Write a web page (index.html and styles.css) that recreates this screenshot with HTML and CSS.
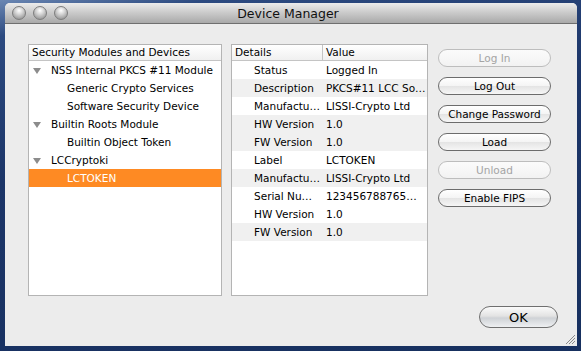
FILE: index.html
```html
<!DOCTYPE html>
<html lang="en">
  <head>
    <meta charset="UTF-8" />
    <title>Device Manager</title>
    <link rel="stylesheet" href="styles.css">
  </head>
  <body>
    <div class="window">
      <!-- title bar with graphite window buttons -->
      <div class="titlebar">
        <div class="lights">
          <span class="light"></span>
          <span class="light"></span>
          <span class="light"></span>
        </div>
        <div class="title">Device Manager</div>
      </div>

      <div class="content">
        <div class="main">
          <div class="panel tree-panel">
            <div class="panel-head">
              <div class="head-cell">Security Modules and Devices</div>
            </div>
            <div class="tree-row"><span class="twisty"></span>NSS Internal PKCS #11 Module</div>
            <div class="tree-row child">Generic Crypto Services</div>
            <div class="tree-row child">Software Security Device</div>
            <div class="tree-row"><span class="twisty"></span>Builtin Roots Module</div>
            <div class="tree-row child">Builtin Object Token</div>
            <div class="tree-row"><span class="twisty"></span>LCCryptoki</div>
            <div class="tree-row child selected">LCTOKEN</div>
          </div>

          <div class="panel details-panel">
            <div class="panel-head">
              <div class="head-cell key">Details</div>
              <div class="head-cell">Value</div>
            </div>
            <div class="detail-row"><span class="key">Status</span><span class="val">Logged In</span></div>
            <div class="detail-row stripe"><span class="key">Description</span><span class="val">PKCS#11 LCC So…</span></div>
            <div class="detail-row"><span class="key">Manufactu…</span><span class="val">LISSI-Crypto Ltd</span></div>
            <div class="detail-row stripe"><span class="key">HW Version</span><span class="val">1.0</span></div>
            <div class="detail-row stripe"><span class="key">FW Version</span><span class="val">1.0</span></div>
            <div class="detail-row"><span class="key">Label</span><span class="val">LCTOKEN</span></div>
            <div class="detail-row stripe"><span class="key">Manufactu…</span><span class="val">LISSI-Crypto Ltd</span></div>
            <div class="detail-row"><span class="key">Serial Nu…</span><span class="val">123456788765…</span></div>
            <div class="detail-row"><span class="key">HW Version</span><span class="val">1.0</span></div>
            <div class="detail-row stripe"><span class="key">FW Version</span><span class="val">1.0</span></div>
          </div>

          <div class="actions">
            <button class="btn" disabled>Log In</button>
            <button class="btn">Log Out</button>
            <button class="btn">Change Password</button>
            <button class="btn">Load</button>
            <button class="btn" disabled>Unload</button>
            <button class="btn">Enable FIPS</button>
          </div>
        </div>

        <div class="footer">
          <button class="ok-button">OK</button>
        </div>
      </div>

      <svg class="grip" width="12" height="12" viewBox="0 0 12 12">
        <path d="M11 2 L2 11 M11 5 L5 11 M11 8 L8 11" stroke="#8a8a8a" stroke-width="1" />
      </svg>
    </div>
  </body>
</html>
```

FILE: styles.css
```css
* {
  box-sizing: border-box;
  margin: 0;
  padding: 0;
}

html,
body {
  height: 100%;
  overflow: hidden;
}

body {
  font-family: "DejaVu Sans", "Lucida Grande", sans-serif;
  font-size: 10.5px;
  color: #000000;
  background: linear-gradient(170deg, #6b87b3 0%, #2c4a80 8%, #1c3568 40%, #17305f 100%);
  padding: 3px 4px 0 5px;
}

.window {
  position: relative;
  height: 343px;
  display: flex;
  flex-direction: column;
  background-color: #ececec;
  border-radius: 5px 5px 0 0;
  overflow: hidden;
}

.titlebar {
  height: 21px;
  flex-shrink: 0;
  display: flex;
  align-items: center;
  background: linear-gradient(#ececec, #c9c9c9 50%, #a9a9a9);
  border-bottom: 1px solid #6f6f6f;
}

.lights {
  display: flex;
  gap: 7px;
  padding-left: 7px;
  width: 80px;
}
.light {
  width: 14px;
  height: 14px;
  border-radius: 50%;
  border: 1px solid #7d7d7d;
  background: radial-gradient(circle at 50% 30%, #ffffff 0%, #d6d6d6 35%, #9c9c9c 80%, #bcbcbc 100%);
}

.title {
  flex-grow: 1;
  text-align: center;
  font-size: 12.5px;
  color: #111111;
  padding-right: 86px;
}

.content {
  flex-grow: 1;
  display: flex;
  flex-direction: column;
  padding: 20px 26px 0 23px;
}

.main {
  display: flex;
  height: 252px;
}

.panel {
  background-color: #ffffff;
  border: 1px solid #b4b4b4;
  display: flex;
  flex-direction: column;
}
.tree-panel {
  width: 194px;
  margin-right: 9px;
}
.details-panel {
  width: 197px;
  margin-right: 10px;
}

.panel-head {
  display: flex;
  height: 16px;
  flex-shrink: 0;
  background: linear-gradient(#ffffff, #f0f0f0);
  border-bottom: 1px solid #c4c4c4;
}
.head-cell {
  line-height: 15px;
  padding-left: 3px;
  flex-grow: 1;
}
.head-cell.key {
  flex-grow: 0;
  width: 91px;
  border-right: 1px solid #c4c4c4;
}

.tree-row {
  height: 18px;
  line-height: 18px;
  padding-left: 22px;
  white-space: nowrap;
  position: relative;
}
.tree-row.child {
  padding-left: 38px;
}
.tree-row.selected {
  background-color: #fe8a23;
  color: #ffffff;
}
.twisty {
  position: absolute;
  left: 4px;
  top: 7px;
  border-left: 4px solid transparent;
  border-right: 4px solid transparent;
  border-top: 6px solid #8c8c8c;
}

.detail-row {
  display: flex;
  height: 18px;
  line-height: 18px;
  white-space: nowrap;
}
.detail-row.stripe {
  background-color: #f0f0f0;
}
.detail-row .key {
  width: 91px;
  padding-left: 22px;
}
.detail-row .val {
  padding-left: 3px;
}

.actions {
  display: flex;
  flex-direction: column;
  gap: 10px;
  padding-top: 5px;
  width: 113px;
}

.btn {
  height: 18px;
  border: 1px solid #6c6c6c;
  border-radius: 9px;
  background: linear-gradient(#ffffff, #f4f4f4 50%, #e4e4e4 51%, #f6f6f6);
  font-family: "DejaVu Sans", "Lucida Grande", sans-serif;
  font-size: 10.5px;
  color: #000000;
}
.btn:disabled {
  border-color: #bdbdbd;
  color: #a4a4a4;
  background: linear-gradient(#fbfbfb, #f2f2f2);
}

.footer {
  display: flex;
  justify-content: flex-end;
  padding-top: 10px;
}

.ok-button {
  width: 79px;
  height: 22px;
  margin-right: -7px;
  border: 1px solid #6f6f6f;
  border-radius: 11px;
  background: linear-gradient(#fafafa, #e3e3e3 45%, #cfd2d6 55%, #eef0f2);
  font-family: "DejaVu Sans", "Lucida Grande", sans-serif;
  font-size: 13px;
  color: #000000;
}

.grip {
  position: absolute;
  right: 1px;
  bottom: 1px;
}
```
